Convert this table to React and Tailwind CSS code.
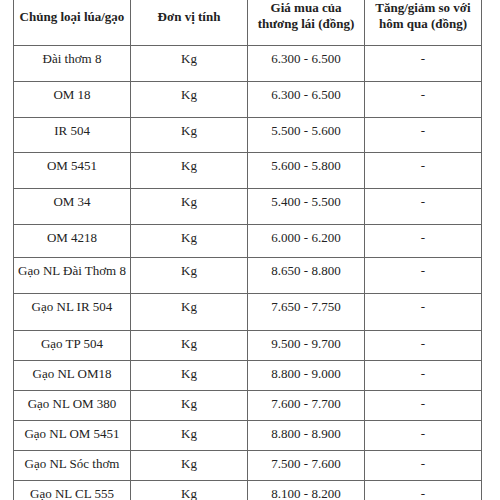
import React from 'react'

const rows = [
  ["Đài thơm 8", "6.300 - 6.500", "h-[36px]"],
  ["OM 18", "6.300 - 6.500", "h-[36px]"],
  ["IR 504", "5.500 - 5.600", "h-[35px]"],
  ["OM 5451", "5.600 - 5.800", "h-[36px]"],
  ["OM 34", "5.400 - 5.500", "h-[36px]"],
  ["OM 4218", "6.000 - 6.200", "h-[33px]"],
  ["Gạo NL Đài Thơm 8", "8.650 - 8.800", "h-[36px]"],
  ["Gạo NL IR 504", "7.650 - 7.750", "h-[37px]"],
  ["Gạo TP 504", "9.500 - 9.700", "h-[30px]"],
  ["Gạo NL OM18", "8.800 - 9.000", "h-[30px]"],
  ["Gạo NL OM 380", "7.600 - 7.700", "h-[30px]"],
  ["Gạo NL OM 5451", "8.800 - 8.900", "h-[30px]"],
  ["Gạo NL Sóc thơm", "7.500 - 7.600", "h-[30px]"],
  ["Gạo NL CL 555", "8.100 - 8.200", "h-[30px]"],
]

function App() {
  const cell = "border border-[#666] text-center align-top pt-[5px] px-1"
  return (
    <div className="w-[500px] h-[500px] overflow-hidden bg-white pl-[13px] text-[#222] text-[13px] leading-[16px]" style={{ fontFamily: '"Liberation Serif", "Times New Roman", serif' }}>
      <table className="border-collapse table-fixed w-[468px] -mt-px">
        <colgroup>
          <col className="w-[117px]" />
          <col className="w-[117px]" />
          <col className="w-[117px]" />
          <col className="w-[117px]" />
        </colgroup>
        <thead>
          <tr className="h-[46px]">
            <th className="border border-[#666] text-center align-top pt-[9px] px-1 font-bold">Chủng loại lúa/gạo</th>
            <th className="border border-[#666] text-center align-top pt-[9px] px-1 font-bold">Đơn vị tính</th>
            <th className="border border-[#666] text-center align-top pt-0 px-1 font-bold">Giá mua của thương lái (đồng)</th>
            <th className="border border-[#666] text-center align-top pt-0 px-1 font-bold">Tăng/giảm so với hôm qua (đồng)</th>
          </tr>
        </thead>
        <tbody>
          {rows.map((r) => (
            <tr key={r[0]} className={r[2]}>
              <td className={cell}>{r[0]}</td>
              <td className={cell}>Kg</td>
              <td className={cell}>{r[1]}</td>
              <td className={cell}>-</td>
            </tr>
          ))}
        </tbody>
      </table>
    </div>
  )
}

export default App
